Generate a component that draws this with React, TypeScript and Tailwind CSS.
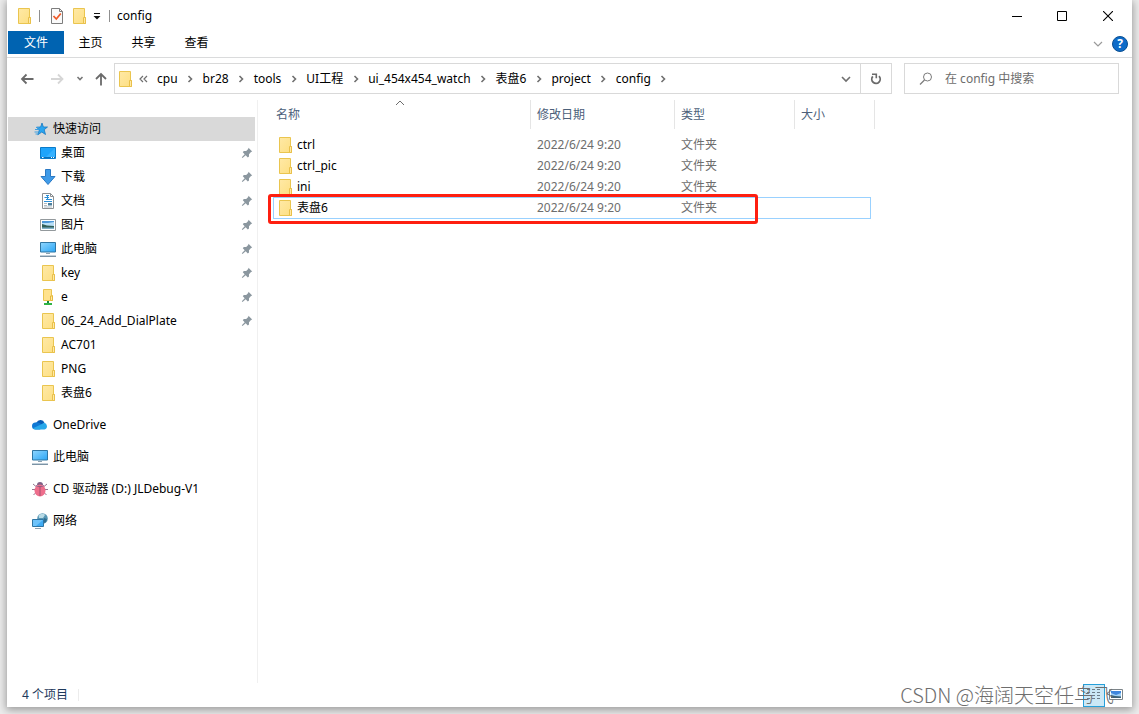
import React, { useState } from "react";

type PlaceIcon = "desktop" | "download" | "document" | "picture" | "pc" | "folder" | "netfolder";

const places: { name: string; icon: PlaceIcon; pinned: boolean }[] = [
  { name: "桌面", icon: "desktop", pinned: true },
  { name: "下载", icon: "download", pinned: true },
  { name: "文档", icon: "document", pinned: true },
  { name: "图片", icon: "picture", pinned: true },
  { name: "此电脑", icon: "pc", pinned: true },
  { name: "key", icon: "folder", pinned: true },
  { name: "e", icon: "netfolder", pinned: true },
  { name: "06_24_Add_DialPlate", icon: "folder", pinned: true },
  { name: "AC701", icon: "folder", pinned: false },
  { name: "PNG", icon: "folder", pinned: false },
  { name: "表盘6", icon: "folder", pinned: false },
];

const crumbs = ["cpu", "br28", "tools", "UI工程", "ui_454x454_watch", "表盘6", "project", "config"];

const files = ["ctrl", "ctrl_pic", "ini", "表盘6"];

const Folder = () => (
  <svg width="16" height="16" viewBox="0 0 16 16" className="shrink-0">
    <defs>
      <linearGradient id="folderFill" x1="0" y1="0" x2="1" y2="1">
        <stop offset="0" stopColor="#ffe9a6" />
        <stop offset="1" stopColor="#fddf82" />
      </linearGradient>
    </defs>
    <path d="M2.500 .5h11v9h1v6h-12z" fill="url(#folderFill)" stroke="#eac54f" />
    <path d="M12.500 15.500v-6h2v6z" fill="#ffe9a6" stroke="#e9c04a" />
  </svg>
);

const Monitor = () => (
  <svg width="16" height="16" viewBox="0 0 16 16" className="shrink-0">
    <defs>
      <linearGradient id="screenFill" x1="0" y1="0" x2="1" y2="1">
        <stop offset="0" stopColor="#8fd6ff" />
        <stop offset="1" stopColor="#2ba6f5" />
      </linearGradient>
    </defs>
    <path d="M.5 1.500h15v9.500h-15z" fill="url(#screenFill)" stroke="#2f76a4" />
    <path d="M6 12.500h4" stroke="#8da2b0" />
    <path d="M0 14h16v1.500H0z" fill="#c3d0da" />
    <path d="M0 15.500h16" stroke="#7b93a5" />
  </svg>
);

const PlaceGlyph = ({ icon }: { icon: PlaceIcon }) => {
  if (icon === "folder") return <Folder />;
  if (icon === "pc") return <Monitor />;
  return (
    <svg width="16" height="16" viewBox="0 0 16 16" className="shrink-0">
      {icon === "desktop" && (
        <>
          <path d="M.5 2.500h15v11h-15z" fill="#1ea4fb" stroke="#0b7bc9" />
          <path d="M15 3L5 13h10z" fill="#36b1ff" />
          <path d="M1 12.500h14" stroke="#0a6fb8" />
          <path d="M2 12.500h1.500M11 12.500h1M13 12.500h1" stroke="#fff" />
        </>
      )}
      {icon === "download" && (
        <path d="M5.500 .5h5v7h4.500L8 15.500 1 7.500h4.500z" fill="#3f9be8" stroke="#2a79c4" />
      )}
      {icon === "document" && (
        <>
          <path d="M2.500 .5h8l3 3v12h-11z" fill="#fff" stroke="#8b8f92" />
          <path d="M10.500 .5v3h3" fill="none" stroke="#8b8f92" />
          <path d="M6 2.500h3M4.500 4.500H9M6 6.500h6M4 8.500h8M7.500 2v5" stroke="#2b8fd6" />
          <path d="M4 10.500h3M4 12.500h3M4 14h8" stroke="#b3bcc2" />
          <path d="M8 10h4v2.500H8z" fill="#4c7f9c" />
        </>
      )}
      {icon === "picture" && (
        <>
          <path d="M.5 2.500h15v11h-15z" fill="#fff" stroke="#93999c" />
          <path d="M2 4h12v8H2z" fill="#b9dff7" />
          <path d="M2 4h12v1L8 6 2 6z" fill="#4d97d8" />
          <path d="M2 7l5 1.500L14 9v2H2z" fill="#315f58" />
          <path d="M2 10.500h12V12H2z" fill="#7fb0c8" />
        </>
      )}
      {icon === "netfolder" && (
        <>
          <path d="M3.500 .5h8v6h1v5h-9z" fill="#ffe28d" stroke="#eac54f" />
          <path d="M10.500 11.500V7h2v4.500z" fill="#ffe9a6" stroke="#e6b93c" />
          <path d="M8 12v3" stroke="#17873a" strokeWidth="2" />
          <path d="M4 15h8" stroke="#2fb344" strokeWidth="2" />
        </>
      )}
    </svg>
  );
};

const StarIcon = () => (
  <svg width="16" height="16" viewBox="0 0 16 16" className="shrink-0">
    <path
      d="M10 2l1.400 4h4.100l-3.300 2.700 1.300 4.800L9.800 11l-4 2.800L7.300 9 4.500 6.200l4.100-.2z"
      fill="#2aa5f0"
      stroke="#1878c2"
      strokeWidth=".8"
    />
    <path d="M4 6.500h3M3 8.500h4M2.500 11h4M3.500 13h3" stroke="#3f9fe0" />
  </svg>
);

const CloudIcon = () => (
  <svg width="16" height="16" viewBox="0 0 16 16" className="shrink-0">
    <path d="M4.500 5.500A4.300 4.300 0 0 1 12.500 6L9 9z" fill="#0a5cb5" />
    <path d="M3.500 12.500a3.500 3.500 0 0 1 0-7c2-.6 3.500.2 8.500 3.500l-4 3.500z" fill="#0f78d4" />
    <path d="M12 5.700a3.500 3.500 0 0 1 .5 6.800h-9c-1.200 0-2-.5-2.600-1.200L9 7.500z" fill="#28a8ea" />
  </svg>
);

const BugIcon = () => (
  <svg width="16" height="16" viewBox="0 0 16 16" className="shrink-0">
    <path
      d="M1 3l3 2.500M15 3l-3 2.500M0 8.500h3M16 8.500h-3M1.500 14L4 11.500M14.500 14L12 11.500"
      stroke="#93768f"
      fill="none"
    />
    <path d="M5 4a3 3 0 0 1 6 0z" fill="#7f6086" />
    <ellipse cx="8" cy="9.500" rx="5.500" ry="6" fill="#ee6e8c" />
    <path d="M4 4.500c2 1.500 6 1.500 8 0" stroke="#8c6488" fill="none" />
    <path d="M8 5v10" stroke="#a1506f" />
  </svg>
);

const NetworkIcon = () => (
  <svg width="16" height="16" viewBox="0 0 16 16" className="shrink-0">
    <circle cx="10.500" cy="5.500" r="5.300" fill="#5796b4" />
    <path d="M6.500 2.500C9 0 12 .5 13 2l-2 3H7z" fill="#b9dbe6" />
    <path d="M12 5l3 1-1 3-2 1z" fill="#2f6e91" />
    <path d="M.5 6.500h11v7H.5z" fill="#6ec3fa" stroke="#2f76a4" />
    <path d="M11 7v6H4z" fill="#3fabf4" />
    <path d="M3 15.500h6" stroke="#8da2b0" />
  </svg>
);

const PinIcon = () => (
  <svg width="12" height="12" viewBox="0 0 12 12" className="shrink-0">
    <path
      d="M7.500 .8l3.700 3.700-1.200.5-2 2.200v2.300L6.800 10.500 4.700 8.300 1.500 11l-.7-.7L3.700 7.200 1.800 5.200 2.800 4h2.400l2-2z"
      fill="#8b979f"
    />
  </svg>
);

const Chevron = ({ d, color = "#6f6f6f", wide = false }: { d: string; color?: string; wide?: boolean }) => (
  <svg width="10" height="10" viewBox="0 0 10 10" className="shrink-0">
    <path d={d} fill="none" stroke={color} strokeWidth={wide ? 1.2 : 1.6} />
  </svg>
);

const down = "M1 3l4 4 4-4";

function TitleBar() {
  return (
    <header className="flex h-[31px] items-center pl-[9px]">
      <Folder />
      <span className="ml-[7px] h-3 w-px bg-[#8f8f8f]" />
      <button aria-label="属性" className="ml-[9px]">
        <svg width="16" height="16" viewBox="0 0 16 16">
          <path d="M2.500 .5h8l3 3v12h-11z" fill="#fafafa" stroke="#7d7d7d" />
          <path d="M10.500 .5v3h3" fill="none" stroke="#7d7d7d" />
          <path d="M4.500 8l2.800 3 4.500-5.500" fill="none" stroke="#ef5a28" strokeWidth="1.800" />
        </svg>
      </button>
      <button aria-label="新建文件夹" className="ml-[6px]">
        <Folder />
      </button>
      <button aria-label="自定义快速访问工具栏" className="ml-[6px]">
        <svg width="8" height="8" viewBox="0 0 8 8">
          <path d="M1 1.500h6" stroke="#111" />
          <path d="M.5 4h7L4 7.500z" fill="#111" />
        </svg>
      </button>
      <span className="ml-[8px] h-3 w-px bg-[#8f8f8f]" />
      <h1 className="ml-[7px] flex-1 text-xs">config</h1>
      <div className="flex">
        <button aria-label="最小化" className="flex h-[31px] w-[45px] items-center justify-center">
          <svg width="10" height="10" viewBox="0 0 10 10">
            <path d="M0 5.500h10" stroke="#000" />
          </svg>
        </button>
        <button aria-label="最大化" className="flex h-[31px] w-[45px] items-center justify-center">
          <svg width="10" height="10" viewBox="0 0 10 10">
            <path d="M.5 .5h9v9h-9z" fill="none" stroke="#000" />
          </svg>
        </button>
        <button aria-label="关闭" className="flex h-[31px] w-[48px] items-center justify-center">
          <svg width="10" height="10" viewBox="0 0 10 10">
            <path d="M0 0l10 10M10 0L0 10" stroke="#000" strokeWidth="1.100" />
          </svg>
        </button>
      </div>
    </header>
  );
}

function RibbonTabs() {
  return (
    <div className="flex h-[27px] items-start border-b border-[#dadbdc] pl-px">
      <button className="h-[23px] w-14 bg-[#0063b1] pt-px text-white">文件</button>
      <button className="h-[23px] w-[53px] pt-px">主页</button>
      <button className="h-[23px] w-[53px] pt-px">共享</button>
      <button className="h-[23px] w-[53px] pt-px">查看</button>
      <div className="ml-auto flex h-[26px] items-center gap-[9px] pr-1">
        <button aria-label="展开功能区">
          <Chevron d={down} color="#9a9a9a" wide />
        </button>
        <button
          aria-label="帮助"
          className="flex size-4 items-center justify-center rounded-full border border-[#0a4f92] bg-[#0d6bc8] text-xs font-bold text-white"
        >
          ?
        </button>
      </div>
    </div>
  );
}

function AddressBar() {
  const [query, setQuery] = useState("");
  return (
    <div className="flex h-[41px] items-center pr-[13px] pl-3">
      <button aria-label="后退" className="w-4">
        <svg width="16" height="14" viewBox="0 0 16 14">
          <path d="M3 7h11.500M7.500 2.500L3 7l4.500 4.500" fill="none" stroke="#6a6a6a" strokeWidth="1.800" />
        </svg>
      </button>
      <button aria-label="前进" className="ml-[14px] w-4">
        <svg width="16" height="14" viewBox="0 0 16 14">
          <path d="M2 7h11.500M9 2.500L13.500 7 9 11.500" fill="none" stroke="#d6d6d6" strokeWidth="1.800" />
        </svg>
      </button>
      <button aria-label="最近浏览的位置" className="ml-[11px] flex">
        <svg width="8" height="8" viewBox="0 0 8 8">
          <path d="M1.500 2L4 4.500 6.500 2" fill="none" stroke="#777" strokeWidth="1.600" />
        </svg>
      </button>
      <button aria-label="上移" className="ml-[10px] w-[14px]">
        <svg width="14" height="14" viewBox="0 0 14 14">
          <path d="M7 13.500V2M2 7l5-5 5 5" fill="none" stroke="#6a6a6a" strokeWidth="1.800" />
        </svg>
      </button>

      <nav className="ml-[6px] flex h-[31px] min-w-0 flex-1 items-center border border-[#d9d9d9]">
        <div className="ml-[2px] flex">
          <Folder />
        </div>
        <svg width="9" height="8" viewBox="0 0 9 8" className="ml-[6px] shrink-0">
          <path d="M4 1L1 4l3 3M8 1L5 4l3 3" fill="none" stroke="#6f6f6f" strokeWidth="1.200" />
        </svg>
        <ol className="ml-[9px] flex min-w-0 flex-1 items-center">
          {crumbs.map((c) => (
            <li key={c} className="flex items-center whitespace-nowrap">
              <a href="#">{c}</a>
              <span className="flex w-[25px] justify-center">
                <Chevron d="M3.500 2l3 3-3 3" />
              </span>
            </li>
          ))}
        </ol>
        <button aria-label="以前的位置" className="flex w-[28px] justify-center">
          <Chevron d={down} />
        </button>
        <button aria-label="刷新" className="flex h-full w-[31px] items-center justify-center border-l border-[#d9d9d9]">
          <svg width="12" height="12" viewBox="0 0 12 12">
            <path d="M9 3.200a4.200 4.200 0 1 1-6.200.2" fill="none" stroke="#6a6a6a" strokeWidth="1.800" />
            <path d="M2 1.300h4.300v4" fill="none" stroke="#6a6a6a" strokeWidth="1.600" />
          </svg>
        </button>
      </nav>

      <div className="ml-3 flex h-[31px] w-[215px] items-center border border-[#d9d9d9] pl-[14px]">
        <svg width="14" height="14" viewBox="0 0 14 14" className="shrink-0">
          <circle cx="8.500" cy="5" r="4" fill="none" stroke="#7b7b7b" />
          <path d="M5.500 8L1 12.500" stroke="#7b7b7b" strokeWidth="1.200" />
        </svg>
        <input
          type="search"
          aria-label="搜索"
          value={query}
          onChange={(e) => setQuery(e.target.value)}
          placeholder="在 config 中搜索"
          className="ml-3 w-full min-w-0 outline-none placeholder:text-[#6d6d6d]"
        />
      </div>
    </div>
  );
}

function Sidebar() {
  return (
    <aside className="mt-px w-[251px] shrink-0 border-r border-[#f0f0f0] pt-[17px] pr-[2px] pl-px">
      <a href="#" className="flex h-6 items-center gap-[5px] bg-[#d9d9d9] pl-6">
        <StarIcon />
        快速访问
      </a>
      <ul>
        {places.map((p) => (
          <li key={p.name}>
            <a href="#" className="flex h-6 items-center gap-[5px] pr-[2px] pl-8">
              <PlaceGlyph icon={p.icon} />
              <span className="flex-1">{p.name}</span>
              {p.pinned && <PinIcon />}
            </a>
          </li>
        ))}
      </ul>
      <div className="mt-2 flex flex-col gap-2">
        <a href="#" className="flex h-6 items-center gap-[5px] pl-6">
          <CloudIcon />
          OneDrive
        </a>
        <a href="#" className="flex h-6 items-center gap-[5px] pl-6">
          <Monitor />
          此电脑
        </a>
        <a href="#" className="flex h-6 items-center gap-[5px] pl-6">
          <BugIcon />
          CD 驱动器 (D:) JLDebug-V1
        </a>
        <a href="#" className="flex h-6 items-center gap-[5px] pl-6">
          <NetworkIcon />
          网络
        </a>
      </div>
    </aside>
  );
}

const headInner = "flex h-[29px] items-center border-r border-[#e5e5e5]";

function FileList() {
  return (
    <main className="min-w-0 flex-1 overflow-hidden pt-px pl-[10px]">
      <div className="relative w-[607px]">
        <table className="w-full table-fixed border-collapse text-left">
          <colgroup>
            <col className="w-[263px]" />
            <col className="w-[144px]" />
            <col className="w-[120px]" />
            <col className="w-[80px]" />
          </colgroup>
          <thead className="text-[#4c607a]">
            <tr className="h-[34px] align-top">
              <th className="relative p-0 font-normal">
                <div className={`${headInner} pl-2`}>名称</div>
                <svg
                  width="10"
                  height="6"
                  viewBox="0 0 10 6"
                  className="absolute top-0 left-1/2 -translate-x-1/2"
                >
                  <path d="M1 5l4-4 4 4" fill="none" stroke="#6d6d6d" />
                </svg>
              </th>
              <th className="p-0 font-normal">
                <div className={`${headInner} pl-[6px]`}>修改日期</div>
              </th>
              <th className="p-0 font-normal">
                <div className={`${headInner} pl-[6px]`}>类型</div>
              </th>
              <th className="p-0 font-normal">
                <div className={`${headInner} pl-[6px]`}>大小</div>
              </th>
            </tr>
          </thead>
          <tbody className="text-[#6d6d6d]">
            {files.map((f) => (
              <tr key={f} className="h-[21px]">
                <td className="p-0 pl-[9px]">
                  <a href="#" className="flex items-center gap-1 text-black">
                    <Folder />
                    {f}
                  </a>
                </td>
                <td className="p-0 pl-[6px]">2022/6/24 9:20</td>
                <td className="p-0 pl-[6px]">文件夹</td>
                <td className="p-0" />
              </tr>
            ))}
          </tbody>
        </table>
        {/* focus rectangle of the last row, with the red mark drawn over it */}
        <div className="pointer-events-none absolute right-1 -bottom-px left-[5px] h-[22px] border border-[#99d1ff]" />
        <div className="pointer-events-none absolute -bottom-[6px] left-0 h-[30px] w-[490px] rounded-[3px] border-3 border-[#fe1f10]" />
      </div>
    </main>
  );
}

function StatusBar() {
  return (
    <footer className="relative flex h-6 items-center pr-2 pl-[15px] text-[#1e395b]">
      <span>4 个项目</span>
      <span className="ml-[10px] h-3 w-px bg-[#ececec]" />
      <button
        aria-label="详细信息"
        className="ml-auto flex h-[23px] w-[22px] items-center justify-center border border-[#26a0da] bg-[#cbe8f6]"
      >
        <svg width="14" height="14" viewBox="0 0 14 14">
          <path
            d="M0 1.500h3M5 1.500h3M10 1.500h3M0 4.500h3M5 4.500h3M10 4.500h3M0 7.500h3M5 7.500h3M10 7.500h3M0 10.500h3M5 10.500h3M10 10.500h3"
            stroke="#6d7d88"
          />
        </svg>
      </button>
      <button aria-label="大图标" className="ml-[3px]">
        <svg width="16" height="12" viewBox="0 0 16 12">
          <path d="M1.500 .5h13v10h-13z" fill="#fff" stroke="#7c8489" />
          <path d="M3 2h10v7H3z" fill="#9fd0f5" />
          <path d="M3 2h10v2L8 6 3 4z" fill="#3f86dc" />
          <path d="M3 6l4 1 6 .5V9H3z" fill="#3b5f72" />
        </svg>
      </button>
      <span className="pointer-events-none absolute right-[18px] bottom-0 font-['Noto_Sans_CJK_SC',sans-serif] text-xl leading-6 font-light whitespace-nowrap text-[#6e6e6e]">
        CSDN @海阔天空任鸟飞
      </span>
    </footer>
  );
}

export default function App() {
  return (
    <div className="flex min-h-screen flex-col bg-[#ececec] px-[7px] pb-[7px] font-['Noto_Sans','Noto_Sans_CJK_SC',sans-serif] text-xs text-black">
      <div className="flex flex-1 flex-col bg-white shadow-[0_2px_8px_1px_rgba(0,0,0,0.35)]">
        <TitleBar />
        <RibbonTabs />
        <AddressBar />
        <div className="flex flex-1">
          <Sidebar />
          <FileList />
        </div>
        <StatusBar />
      </div>
    </div>
  );
}
